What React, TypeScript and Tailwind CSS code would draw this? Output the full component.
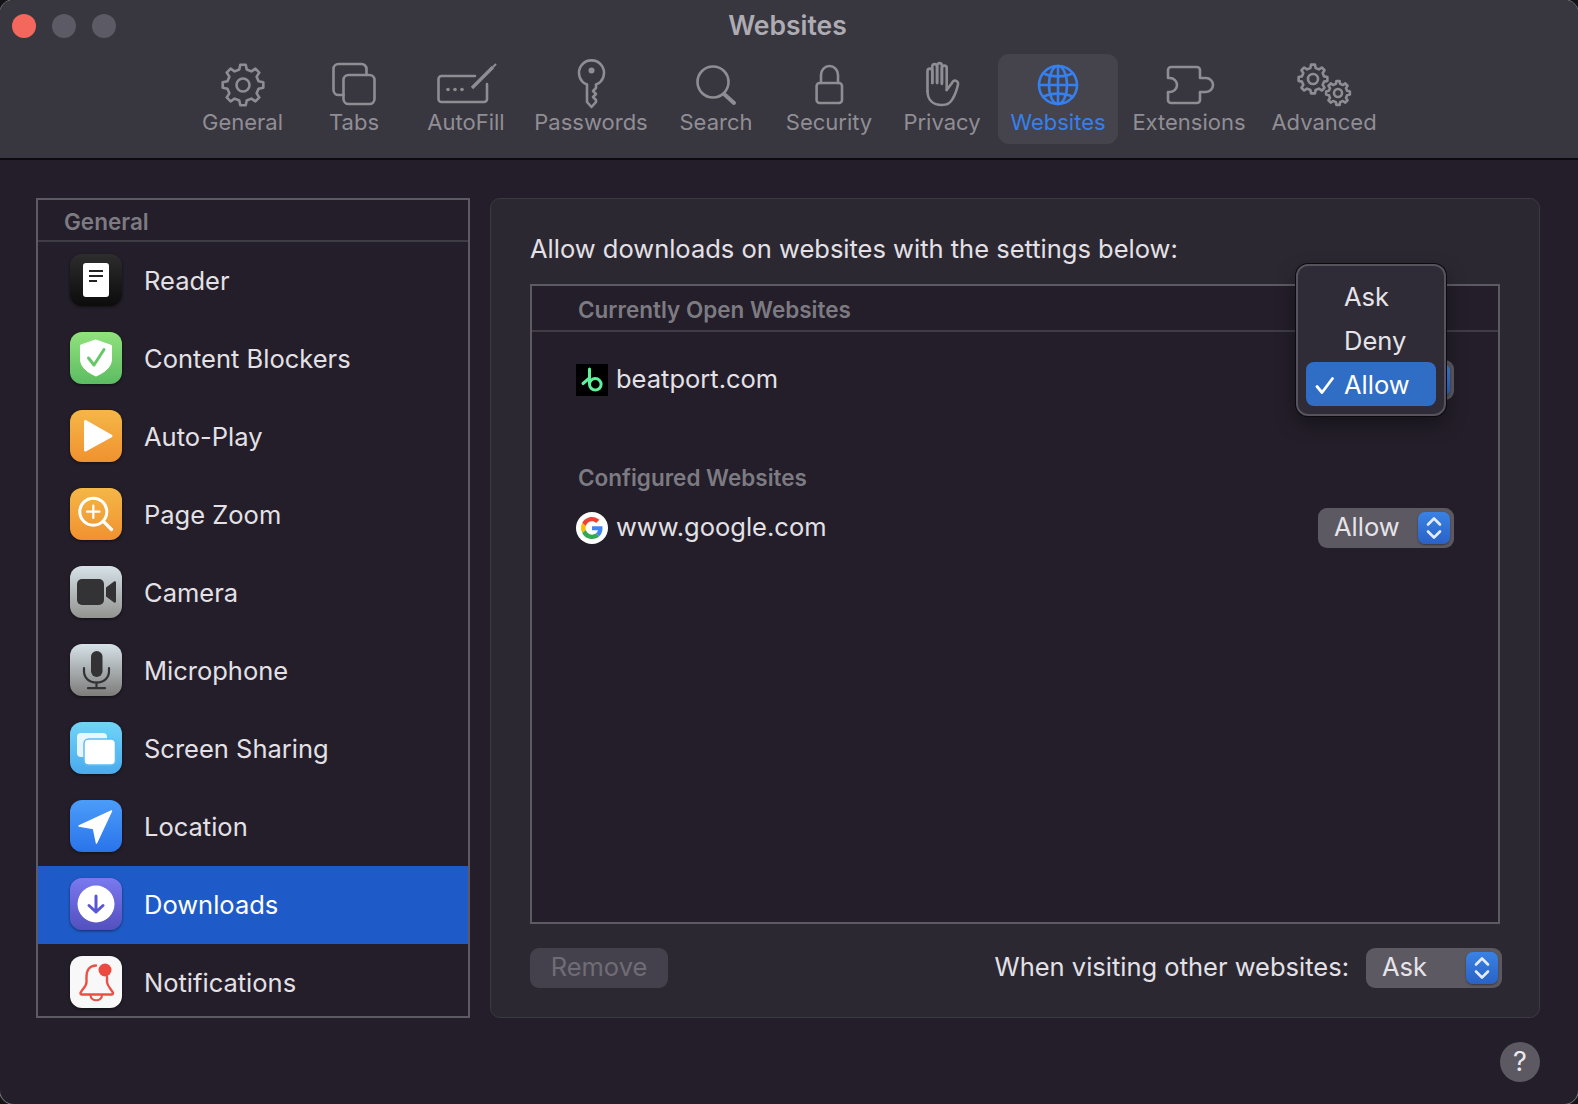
import type { ReactNode } from "react";

function gearPath(cx: number, cy: number, r: number, teeth: number) {
  const inner = r * 0.78;
  const step = (Math.PI * 2) / teeth;
  let d = "";
  for (let i = 0; i < teeth; i++) {
    const a = i * step - Math.PI / 2;
    const pts = [
      [inner, a - step * 0.3],
      [r, a - step * 0.17],
      [r, a + step * 0.17],
      [inner, a + step * 0.3],
    ];
    pts.forEach(([rad, an], j) => {
      const x = (cx + rad * Math.cos(an)).toFixed(2);
      const y = (cy + rad * Math.sin(an)).toFixed(2);
      d += i === 0 && j === 0 ? `M${x} ${y}` : `L${x} ${y}`;
    });
  }
  return d + "Z";
}

function ToolIcon({ children, color = "#8f8d94" }: { children: ReactNode; color?: string }) {
  return (
    <svg
      viewBox="0 0 56 48"
      className="h-[48px] w-[56px] overflow-visible"
      fill="none"
      stroke={color}
      strokeWidth="2.6"
      strokeLinecap="round"
      strokeLinejoin="round"
    >
      {children}
    </svg>
  );
}

const tools: { label: string; width: string; icon: ReactNode; active?: boolean }[] = [
  {
    label: "General",
    width: "w-[111px]",
    icon: (
      <ToolIcon>
        <path d={gearPath(28, 25, 20.5, 8)} />
        <circle cx="28" cy="25" r="6.5" />
      </ToolIcon>
    ),
  },
  {
    label: "Tabs",
    width: "w-[112px]",
    icon: (
      <ToolIcon>
        <path d="M17.5 35H12.5a5 5 0 0 1-5-5V9a5 5 0 0 1 5-5H35.5a5 5 0 0 1 5 5V15" />
        <rect x="17.5" y="15" width="31" height="29" rx="5" />
      </ToolIcon>
    ),
  },
  {
    label: "AutoFill",
    width: "w-[112px]",
    icon: (
      <ToolIcon>
        <path d="M37 16H3.5a3 3 0 0 0-3 3V39a3 3 0 0 0 3 3H46a3 3 0 0 0 3-3V24" />
        <path d="M34 28L55 7" strokeWidth="3.4" strokeLinecap="butt" />
        <path d="M55.5 6.5L57.5 4.5" strokeWidth="2" />
        <circle cx="10" cy="29.5" r="1.8" fill="#8f8d94" stroke="none" />
        <circle cx="17" cy="29.5" r="1.8" fill="#8f8d94" stroke="none" />
        <circle cx="24" cy="29.5" r="1.8" fill="#8f8d94" stroke="none" />
      </ToolIcon>
    ),
  },
  {
    label: "Passwords",
    width: "w-[138px]",
    icon: (
      <ToolIcon>
        <path d="M24 24.5A12.5 12.5 0 1 1 33 24.5V28L30 31L33 34L30 37L33 40V42L28.5 47L24 42Z" />
        <circle cx="28.5" cy="10.5" r="3" fill="#8f8d94" stroke="none" />
      </ToolIcon>
    ),
  },
  {
    label: "Search",
    width: "w-[112px]",
    icon: (
      <ToolIcon>
        <circle cx="25" cy="22" r="15.5" />
        <path d="M36 34L46 43" strokeWidth="4" />
      </ToolIcon>
    ),
  },
  {
    label: "Security",
    width: "w-[114px]",
    icon: (
      <ToolIcon>
        <rect x="15.6" y="23" width="25.4" height="20" rx="3" />
        <path d="M20 23V15a8.5 9 0 0 1 17 0V23" />
      </ToolIcon>
    ),
  },
  {
    label: "Privacy",
    width: "w-[112px]",
    icon: (
      <ToolIcon>
        <path d="M13.5 31V11a2.4 2.4 0 0 1 4.8 0V23" />
        <path d="M18.3 23V6.5a2.4 2.4 0 0 1 4.8 0V23" />
        <path d="M23.1 23V5.5a2.4 2.4 0 0 1 4.8 0V23" />
        <path d="M27.9 24V8a2.4 2.4 0 0 1 4.8 0V30" />
        <path d="M32.7 30L38 23a3 3 0 0 1 6 1.5C43 29 41 35 38.5 39C36.5 43 33 45 28 45C19 45 13.5 40 13.5 31" />
      </ToolIcon>
    ),
  },
  {
    label: "Websites",
    width: "w-[120px]",
    active: true,
    icon: (
      <ToolIcon color="#3580ee">
        <circle cx="28" cy="25" r="19" />
        <ellipse cx="28" cy="25" rx="9" ry="19" />
        <path d="M28 6V44M9 25H47" />
        <path d="M13 13C21 17.5 35 17.5 43 13M13 37C21 32.5 35 32.5 43 37" />
      </ToolIcon>
    ),
  },
  {
    label: "Extensions",
    width: "w-[142px]",
    icon: (
      <ToolIcon>
        <path d="M10 7H36a3 3 0 0 1 3 3V18h6a7 7 0 0 1 0 14h-6V40a3 3 0 0 1-3 3H10a3 3 0 0 1-3-3V32h2a7 7 0 0 0 0-14H7V10a3 3 0 0 1 3-3Z" />
      </ToolIcon>
    ),
  },
  {
    label: "Advanced",
    width: "w-[128px]",
    icon: (
      <ToolIcon>
        <path d={gearPath(17, 19, 14.5, 8)} />
        <circle cx="17" cy="19" r="5" />
        <path d={gearPath(42, 33, 12, 8)} />
        <circle cx="42" cy="33" r="4" />
      </ToolIcon>
    ),
  },
];

function AppIcon({ className, children }: { className: string; children: ReactNode }) {
  return (
    <div className={`mb-[2px] h-[52px] w-[52px] shrink-0 rounded-[12px] shadow-[0_1px_3px_rgba(0,0,0,0.5)] ${className}`}>
      <svg viewBox="0 0 52 52" className="h-full w-full" fill="none" strokeLinecap="round" strokeLinejoin="round">
        {children}
      </svg>
    </div>
  );
}

const sites: { label: string; selected?: boolean; icon: ReactNode }[] = [
  {
    label: "Reader",
    icon: (
      <AppIcon className="bg-linear-to-b from-[#2d2d2d] to-[#0c0c0c]">
        <rect x="13" y="9" width="26" height="34" rx="3" fill="#fff" />
        <path d="M19 17H33M19 22H33M19 27H27" stroke="#222" strokeWidth="1.8" strokeLinecap="butt" />
      </AppIcon>
    ),
  },
  {
    label: "Content Blockers",
    icon: (
      <AppIcon className="bg-linear-to-b from-[#90e27c] to-[#5cbc62]">
        <path d="M26 8L41.5 13.5V27C41.5 36 33 41 26 44C19 41 10.5 36 10.5 27V13.5Z" fill="#fff" stroke="#fff" strokeWidth="1" />
        <path d="M18.5 26L24 33L34 17.5" stroke="#66c768" strokeWidth="3" />
      </AppIcon>
    ),
  },
  {
    label: "Auto-Play",
    icon: (
      <AppIcon className="bg-linear-to-b from-[#f4b746] to-[#f0912f]">
        <path d="M15.5 11.5L41 26L15.5 40Z" fill="#fff" stroke="#fff" strokeWidth="3" />
      </AppIcon>
    ),
  },
  {
    label: "Page Zoom",
    icon: (
      <AppIcon className="bg-linear-to-b from-[#f4b746] to-[#f0912f]">
        <circle cx="23.3" cy="23.7" r="13.5" stroke="#fff" strokeWidth="3" />
        <path d="M33.5 33.5L41.5 41.5" stroke="#fff" strokeWidth="3.2" />
        <path d="M23.3 17.5V30M17 23.7H29.5" stroke="#fff" strokeWidth="2.2" />
      </AppIcon>
    ),
  },
  {
    label: "Camera",
    icon: (
      <AppIcon className="bg-linear-to-b from-[#d6e2e8] to-[#939490]">
        <rect x="7" y="13" width="27" height="26" rx="5" fill="#333335" />
        <path d="M36 21.5L44 15.5C45 15 46 15.5 46 16.5V35.5C46 36.5 45 37 44 36.5L36 30.5Z" fill="#333335" />
      </AppIcon>
    ),
  },
  {
    label: "Microphone",
    icon: (
      <AppIcon className="bg-linear-to-b from-[#d6e2e8] to-[#7d7d7b]">
        <rect x="21" y="7" width="11.5" height="26" rx="5.75" fill="#333335" />
        <path d="M14 24V27C14 34 19 38.5 26.5 38.5C34 38.5 39 34 39 27V24" stroke="#333335" strokeWidth="2.2" />
        <path d="M26.5 38.5V44M18 44.2H35" stroke="#333335" strokeWidth="2.2" />
      </AppIcon>
    ),
  },
  {
    label: "Screen Sharing",
    icon: (
      <AppIcon className="bg-linear-to-b from-[#72d4f6] to-[#49aaee]">
        <rect x="7" y="11" width="30" height="24" rx="4" fill="#fff" fillOpacity="0.85" />
        <rect x="14" y="17" width="31.5" height="26" rx="4.5" fill="#fff" stroke="#5ebdf2" strokeWidth="1.5" />
      </AppIcon>
    ),
  },
  {
    label: "Location",
    icon: (
      <AppIcon className="bg-linear-to-b from-[#4b9df9] to-[#2a73ea]">
        <path d="M41.5 11L9 26L23.5 28.5L26.5 43Z" fill="#fff" stroke="#fff" strokeWidth="1.5" />
      </AppIcon>
    ),
  },
  {
    label: "Downloads",
    selected: true,
    icon: (
      <AppIcon className="bg-linear-to-b from-[#7b79ef] to-[#5350bf]">
        <circle cx="26" cy="26" r="18.5" fill="#fff" />
        <path d="M26 18V34M19 27.5L26 34L33 27.5" stroke="#5a57d2" strokeWidth="3" />
      </AppIcon>
    ),
  },
  {
    label: "Notifications",
    icon: (
      <AppIcon className="bg-[#f8f8f8]">
        <path d="M26 9.5C20 9.5 16.5 14 16.5 21V26C16.5 31 12 33 10.5 37C10.5 38 11 38.5 12 38.5H41.5C42.5 38.5 43 38 43 37C41.5 33 37.5 31 37 26V21" stroke="#ec5045" strokeWidth="2.4" />
        <path d="M20.5 39C20.5 46 32 46 32 39" stroke="#ec5045" strokeWidth="2.2" />
        <circle cx="35" cy="14" r="6.5" fill="#ec4a3f" />
      </AppIcon>
    ),
  },
];

function Stepper() {
  return (
    <div className="flex h-[32px] w-[32px] items-center justify-center rounded-[7px] bg-linear-to-b from-[#3a82e4] to-[#2a62c6] shadow-[0_1px_2px_rgba(0,0,0,0.4)]">
      <svg viewBox="0 0 32 32" className="h-[32px] w-[32px]" fill="none" stroke="#e4ecf8" strokeWidth="2.6" strokeLinecap="round" strokeLinejoin="round">
        <path d="M10 12.5L16 6.5L22 12.5M10 19.5L16 25.5L22 19.5" />
      </svg>
    </div>
  );
}

function Select({ value, children }: { value?: string; children?: ReactNode }) {
  return (
    <div className="relative flex h-[40px] w-[136px] items-center justify-between rounded-[9px] bg-[#5c5962] pl-[16px] pr-[4px] text-[#e6e4e9]">
      <span className="pb-[2px]">{value}</span>
      <Stepper />
      {children}
    </div>
  );
}

function Favicon({ children, className }: { children: ReactNode; className?: string }) {
  return (
    <svg viewBox="0 0 32 32" className={`h-[32px] w-[32px] shrink-0 ${className ?? ""}`} fill="none">
      {children}
    </svg>
  );
}

export default function App() {
  return (
    <div className="h-[1104px] w-[1578px] overflow-hidden bg-[#141316]">
      <div
        className="flex h-[1104px] w-[1578px] flex-col overflow-hidden rounded-[14px] bg-[#231e29] text-[25.5px] text-[#e3e1e6] ring-1 ring-[#77757c]"
        style={{ fontFamily: "Inter, 'Liberation Sans', sans-serif" }}
      >
        <header className="h-[160px] shrink-0 border-b-2 border-[#0c0b0f] bg-[#38363e]">
          <div className="relative flex h-[54px] items-center justify-center pb-[2px] pr-[3px]">
            <div className="absolute left-[12px] top-[14px] flex gap-[16px]">
              <span className="h-[24px] w-[24px] rounded-full bg-[#f4675c]" />
              <span className="h-[24px] w-[24px] rounded-full bg-[#5c5a64]" />
              <span className="h-[24px] w-[24px] rounded-full bg-[#5c5a64]" />
            </div>
            <h1 className="text-[26.5px] font-semibold text-[#aeacb3]">Websites</h1>
          </div>
          <nav className="flex pl-[187px]">
            {tools.map((tool) => (
              <div
                key={tool.label}
                className={`flex h-[90px] flex-col items-center rounded-[11px] pt-[6px] text-[22px] leading-[28px] ${tool.width} ${
                  tool.active ? "bg-[#45434c] text-[#3580ee]" : "text-[#908e95]"
                }`}
              >
                {tool.icon}
                <span>{tool.label}</span>
              </div>
            ))}
          </nav>
        </header>

        <main className="flex items-start pl-[36px] pt-[38px]">
          <aside className="h-[820px] w-[434px] shrink-0 overflow-hidden border-2 border-[#5d5a64]">
            <div className="flex h-[42px] items-center border-b-2 border-[#3f3c46] pl-[26px] pt-[3px] text-[22.5px] font-semibold text-[#7d7b82]">
              General
            </div>
            <ul>
              {sites.map((site) => (
                <li
                  key={site.label}
                  className={`flex h-[78px] items-center gap-[22px] pl-[32px] ${
                    site.selected ? "bg-[#1f5bc8] text-white" : ""
                  }`}
                >
                  {site.icon}
                  <span>{site.label}</span>
                </li>
              ))}
            </ul>
          </aside>

          <section className="ml-[20px] h-[820px] w-[1050px] shrink-0 rounded-[10px] border border-[#3c3943] bg-[#2c2832] pl-[39px] pt-[35px]">
            <p className="h-[30px] leading-[30px]">Allow downloads on websites with the settings below:</p>
            <div className="mt-[20px] h-[640px] w-[970px] border-2 border-[#5d5a64] bg-[#231e29]">
              <div className="flex h-[46px] items-center border-b-2 border-[#3f3c46] pl-[46px] pt-[4px] text-[22.5px] font-semibold text-[#7d7b82]">
                Currently Open Websites
              </div>
              <div className="flex flex-col pl-[44px] pr-[44px] pt-[28px]">
                <div className="flex items-center justify-between">
                  <div className="flex items-center gap-[8px]">
                    <Favicon>
                      <rect width="32" height="32" fill="#000" />
                      <path d="M13.5 5V20.3a5.8 5.8 0 1 0 5.8-5.8a5.8 5.8 0 0 0-5.8 5.8M7 19.5L13.5 14" stroke="#5df29b" strokeWidth="3" strokeLinecap="round" />
                    </Favicon>
                    <span className="pb-[2px]">beatport.com</span>
                  </div>
                  <Select>
                    <div className="absolute left-[-22px] top-[-96px] z-10 h-[152px] w-[150px] rounded-[12px] border-2 border-[#56535d] bg-[#2f2c37] p-[8px] shadow-[0_0_0_1px_#0b0a0e,0_8px_20px_rgba(0,0,0,0.35)]">
                      <div className="flex h-[44px] items-center pl-[38px] pt-[2px]">Ask</div>
                      <div className="flex h-[44px] items-center pl-[38px] pt-[2px]">Deny</div>
                      <div className="flex h-[44px] items-center gap-[10px] rounded-[8px] bg-[#2f6ec4] pl-[9px] pt-[2px] text-white">
                        <svg viewBox="0 0 19 19" className="h-[19px] w-[19px]" fill="none" stroke="#fff" strokeWidth="2.8" strokeLinecap="round" strokeLinejoin="round">
                          <path d="M2 10.5L7 16.5L17.5 2.5" />
                        </svg>
                        <span>Allow</span>
                      </div>
                    </div>
                  </Select>
                </div>
                <div className="mt-[64px] flex h-[28px] items-center pl-[2px] text-[22.5px] font-semibold text-[#7d7b82]">
                  Configured Websites
                </div>
                <div className="mt-[16px] flex items-center justify-between">
                  <div className="flex items-center gap-[8px]">
                    <Favicon>
                      <circle cx="16" cy="16" r="16" fill="#fff" />
                      <g transform="translate(5 5) scale(0.458)">
                        <path fill="#EA4335" d="M24 9.5c3.54 0 6.71 1.22 9.21 3.6l6.85-6.85C35.9 2.38 30.47 0 24 0 14.62 0 6.51 5.38 2.56 13.22l7.98 6.19C12.43 13.72 17.74 9.5 24 9.5z" />
                        <path fill="#4285F4" d="M46.98 24.55c0-1.57-.15-3.09-.38-4.55H24v9.02h12.94c-.58 2.96-2.26 5.48-4.78 7.18l7.73 6c4.51-4.18 7.09-10.36 7.09-17.65z" />
                        <path fill="#FBBC05" d="M10.53 28.59c-.48-1.45-.76-2.99-.76-4.59s.27-3.14.76-4.59l-7.98-6.19C.92 16.46 0 20.12 0 24c0 3.88.92 7.54 2.56 10.78l7.97-6.19z" />
                        <path fill="#34A853" d="M24 48c6.48 0 11.93-2.13 15.89-5.81l-7.73-6c-2.15 1.45-4.92 2.3-8.16 2.3-6.26 0-11.57-4.22-13.47-9.91l-7.98 6.19C6.51 42.62 14.62 48 24 48z" />
                      </g>
                    </Favicon>
                    <span className="pb-[2px]">www.google.com</span>
                  </div>
                  <Select value="Allow" />
                </div>
              </div>
            </div>
            <div className="mt-[24px] flex w-[972px] items-center justify-between">
              <div className="flex h-[40px] w-[138px] items-center justify-center rounded-[9px] bg-[#45414c] pb-[2px] text-[#6f6c76]">Remove</div>
              <div className="flex items-center gap-[17px]">
                <span className="pb-[2px]">When visiting other websites:</span>
                <Select value="Ask" />
              </div>
            </div>
          </section>
        </main>

        <div className="flex justify-end pr-[38px] pt-[24px]">
          <div className="flex h-[40px] w-[40px] items-center justify-center rounded-full bg-[#5c5962] text-[27px] text-[#ebe9ee]">?</div>
        </div>
      </div>
    </div>
  );
}
